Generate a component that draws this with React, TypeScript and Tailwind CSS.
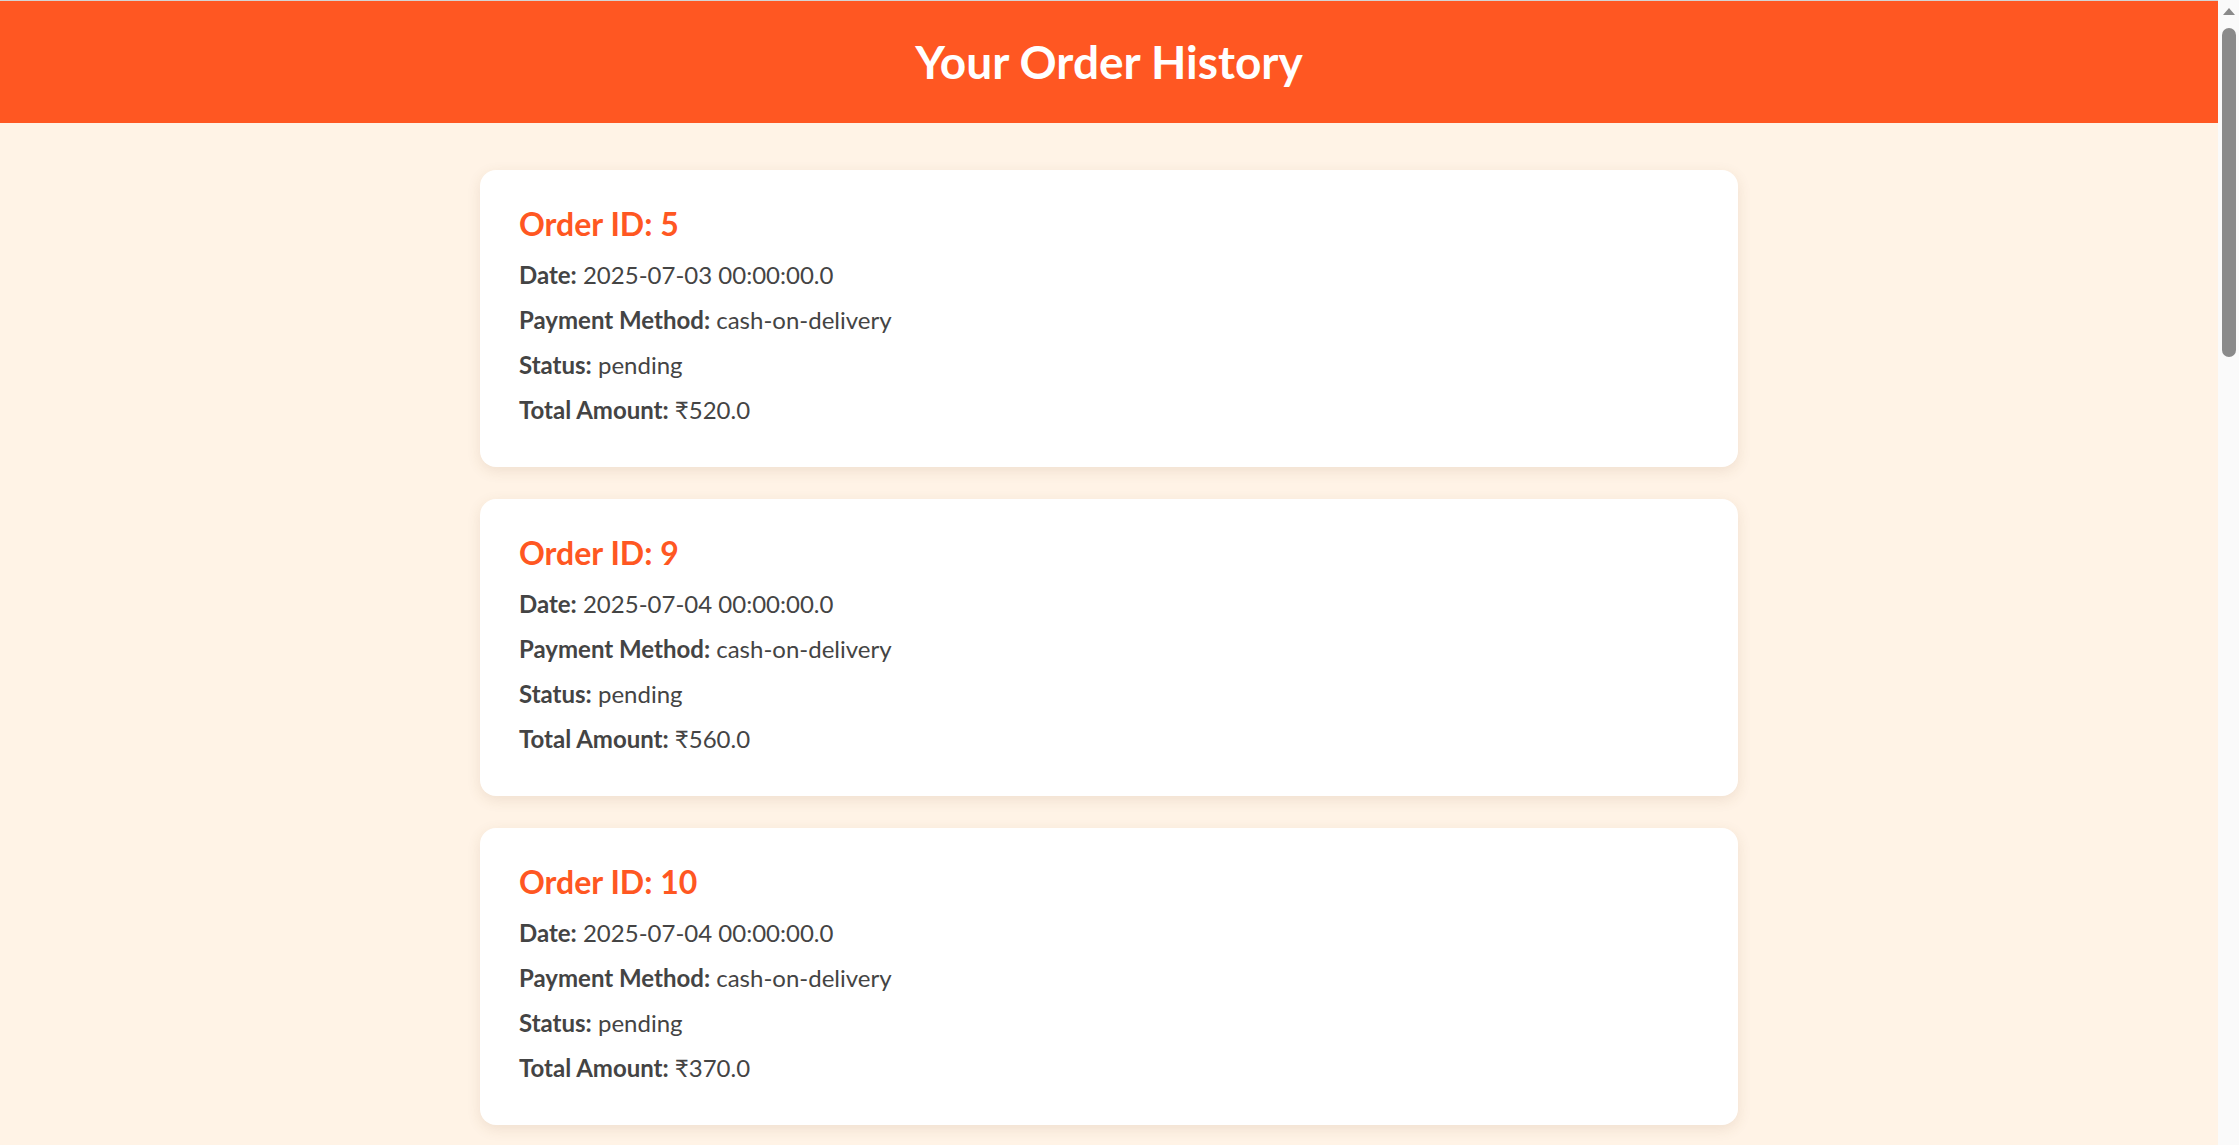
import React from "react";

const orders = [
  { id: 5, date: "2025-07-03 00:00:00.0", method: "cash-on-delivery", status: "pending", total: "₹520.0" },
  { id: 9, date: "2025-07-04 00:00:00.0", method: "cash-on-delivery", status: "pending", total: "₹560.0" },
  { id: 10, date: "2025-07-04 00:00:00.0", method: "cash-on-delivery", status: "pending", total: "₹370.0" },
];

function Row({ label, value }: { label: string; value: string }) {
  return (
    <p className="text-[24px] leading-[45px] text-[#444444]">
      <span className="font-bold">{label}</span> {value}
    </p>
  );
}

export default function App() {
  return (
    <div className="flex h-[1145px] w-full overflow-hidden bg-[#fafafa] font-['Lato','Noto_Sans',sans-serif]">
      <div className="flex h-full flex-1 flex-col overflow-hidden bg-[#fff3e6]">
        <div className="h-px w-full bg-[#d4d4d4]" />
        <header className="flex h-[122px] items-center justify-center bg-[#ff5722]">
          <h1 className="text-[46px] font-bold leading-none text-white">Your Order History</h1>
        </header>
        <main className="flex flex-col items-center gap-[32px] pt-[47px]">
          {orders.map((o) => (
            <div
              key={o.id}
              className="w-[1258px] rounded-[16px] bg-white pl-[39px] pt-[35px] pb-[35px] shadow-[0_4px_14px_rgba(120,80,40,0.12)]"
            >
              <h2 className="mb-[10px] text-[32px] font-bold leading-[37px] text-[#ff5722]">Order ID: {o.id}</h2>
              <Row label="Date:" value={o.date} />
              <Row label="Payment Method:" value={o.method} />
              <Row label="Status:" value={o.status} />
              <Row label="Total Amount:" value={o.total} />
            </div>
          ))}
        </main>
      </div>
      <div className="flex h-full w-[21px] flex-col items-center bg-[#fafafa]">
        <svg width="14" height="10" viewBox="0 0 14 10" className="mt-[6px]">
          <path d="M1 9 L7 2 L13 9 Z" fill="#8a8a8a" />
        </svg>
        <div className="mt-[12px] h-[329px] w-[14px] rounded-full bg-[#8a8a8a]" />
      </div>
    </div>
  );
}
